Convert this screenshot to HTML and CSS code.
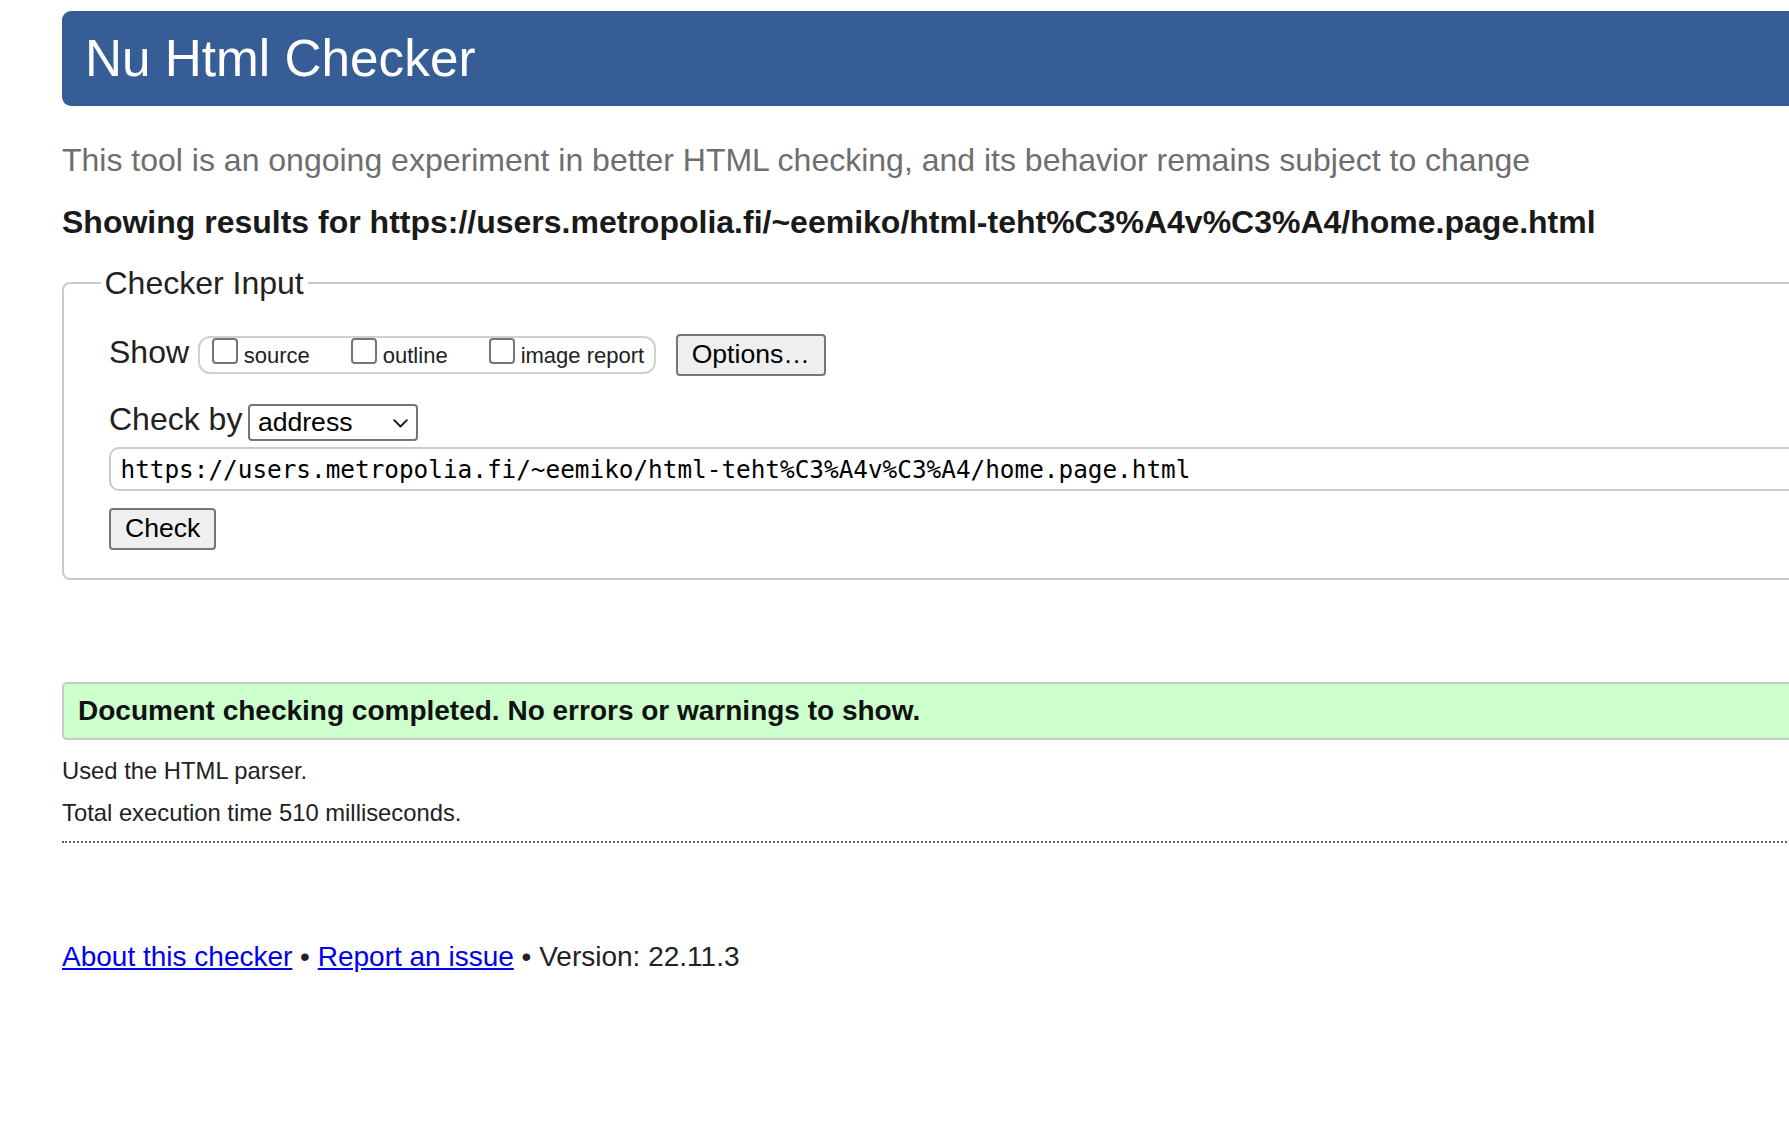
FILE: index.html
```html
<!DOCTYPE html>
<html lang="en">
<head>
<meta charset="utf-8">
<title>Showing results for https://users.metropolia.fi/~eemiko/html-teht%C3%A4v%C3%A4/home.page.html - Nu Html Checker</title>
<link rel="stylesheet" href="styles.css">
</head>
<body>
<div class="page">
  <h1 class="masthead">Nu Html Checker</h1>
  <p class="intro">This tool is an ongoing experiment in better HTML checking, and its behavior remains subject to change</p>
  <h2 class="results-title">Showing results for https://users.metropolia.fi/~eemiko/html-teht%C3%A4v%C3%A4/home.page.html</h2>
  <form class="checker-form" action="#">
    <fieldset class="checker-input">
      <legend class="checker-legend">Checker Input</legend>
      <div class="row row-show">
        <span class="row-label">Show</span>
        <span class="show-options">
          <label class="opt"><input type="checkbox" class="cb"><span class="opt-text">source</span></label>
          <label class="opt"><input type="checkbox" class="cb"><span class="opt-text">outline</span></label>
          <label class="opt"><input type="checkbox" class="cb"><span class="opt-text">image report</span></label>
        </span>
        <button type="button" class="btn btn-options">Options…</button>
      </div>
      <div class="row row-checkby">
        <span class="row-label">Check by</span>
        <span class="select-wrap">
          <select class="select" aria-label="Check by"><option>address</option></select>
          <svg class="chevron" width="15" height="9" viewBox="0 0 15 9" aria-hidden="true"><path d="M1.2 1.2 L7.5 7.5 L13.8 1.2" fill="none" stroke="#1a1a1a" stroke-width="1.9" stroke-linecap="round" stroke-linejoin="round"/></svg>
        </span>
      </div>
      <div class="row row-url">
        <input type="url" class="url-input" value="https://users.metropolia.fi/~eemiko/html-teht%C3%A4v%C3%A4/home.page.html" aria-label="Document URL">
      </div>
      <div class="row row-submit">
        <button type="button" class="btn btn-check">Check</button>
      </div>
    </fieldset>
  </form>
  <p class="success">Document checking completed. No errors or warnings to show.</p>
  <p class="meta">Used the HTML parser.</p>
  <p class="meta">Total execution time 510 milliseconds.</p>
  <hr class="dotted">
  <p class="footer"><a href="#">About this checker</a> • <a href="#">Report an issue</a> • Version: 22.11.3</p>
</div>
</body>
</html>
```

FILE: styles.css
```css
html, body {
  margin: 0;
  padding: 0;
  background: #fff;
  overflow: hidden;
}

body {
  font-family: "Liberation Sans", Arial, sans-serif;
  color: #222;
  font-size: 23.8px;
}

.page {
  width: 1800px;
  padding: 11px 0 0 62px;
}

.masthead {
  margin: 0;
  height: 95px;
  line-height: 95px;
  font-size: 51.3px;
  font-weight: normal;
  color: #fff;
  background: #365d95;
  border-radius: 9px;
  padding-left: 23px;
}

.intro {
  margin: 35.5px 0 0;
  font-size: 32px;
  line-height: normal;
  color: #6e6e6e;
}

.results-title {
  margin: 25px 0 0;
  font-size: 32px;
  font-weight: bold;
  line-height: normal;
  color: #1a1a1a;
}

.checker-form {
  margin: 0;
}

.checker-input {
  margin: 24px 0 0;
  padding: 32px 0 28.7px 45px;
  border: 2px solid #cacaca;
  border-radius: 8px;
  min-width: 0;
}

.checker-legend {
  font-size: 32px;
  line-height: normal;
  padding: 0 4px;
  margin-left: -8.5px;
  color: #222;
}

.row {
  display: flex;
  align-items: flex-start;
}

.row-label {
  font-size: 32px;
  line-height: normal;
}

.show-options {
  display: flex;
  align-items: flex-start;
  gap: 41px;
  box-sizing: border-box;
  height: 38px;
  margin: 2.3px 0 0 9px;
  padding: 0 10px 0 11.7px;
  border: 2px solid #d0d0d0;
  border-radius: 12px;
}

.opt {
  display: flex;
  align-items: flex-end;
  gap: 6px;
  font-size: 22px;
  color: #222;
}

.cb {
  appearance: none;
  -webkit-appearance: none;
  flex: none;
  box-sizing: border-box;
  width: 26px;
  height: 26px;
  margin: 0 0 3.4px 0;
  border: 2px solid #767676;
  border-radius: 4px;
  background: #fff;
}

.opt-text {
  line-height: 1;
}

.btn {
  box-sizing: border-box;
  height: 42px;
  font-family: "Liberation Sans", Arial, sans-serif;
  font-size: 26.6px;
  line-height: normal;
  color: #000;
  background: #efefef;
  border: 2px solid #767676;
  border-radius: 4px;
}

.btn-options {
  margin-left: 19.5px;
  padding: 0 14px;
}

.row-checkby {
  margin-top: 25.5px;
}

.select-wrap {
  position: relative;
  display: block;
  margin: 2.5px 0 0 6px;
}

.select {
  appearance: none;
  -webkit-appearance: none;
  display: block;
  box-sizing: border-box;
  width: 169.5px;
  height: 37px;
  margin: 0;
  padding: 0 0 0 7.5px;
  font-family: "Liberation Sans", Arial, sans-serif;
  font-size: 26.6px;
  color: #000;
  background: #fff;
  border: 2px solid #767676;
  border-radius: 4px;
}

.chevron {
  position: absolute;
  right: 10px;
  top: 15px;
  pointer-events: none;
}

.row-url {
  margin-top: 6px;
}

.url-input {
  display: block;
  box-sizing: border-box;
  width: 100%;
  height: 44px;
  margin: 0;
  padding: 1px 9.5px 0;
  font-family: "DejaVu Sans Mono", "Liberation Mono", monospace;
  font-size: 24.35px;
  color: #000;
  background: #fff;
  border: 2px solid #cacaca;
  border-radius: 10px;
}

.row-submit {
  margin-top: 17.3px;
}

.btn-check {
  padding: 0 14px;
}

.success {
  box-sizing: border-box;
  height: 58.5px;
  margin: 101.5px 0 0;
  padding: 10.6px 14px 0;
  font-size: 28px;
  font-weight: bold;
  line-height: normal;
  color: #111;
  background: #ccffcc;
  border: 2px solid #c4cbc4;
  border-radius: 5px;
}

.meta {
  margin: 16.1px 0 0;
  font-size: 23.8px;
  line-height: normal;
  color: #222;
}

.meta + .meta {
  margin-top: 14.8px;
}

.dotted {
  height: 0;
  margin: 13.8px 0 0;
  border: 0;
  border-top: 2px dotted #666;
}

.footer {
  margin: 97.4px 0 0;
  font-size: 28px;
  line-height: normal;
  color: #222;
}

.footer a {
  color: #0000ee;
  text-decoration: underline;
}
```
